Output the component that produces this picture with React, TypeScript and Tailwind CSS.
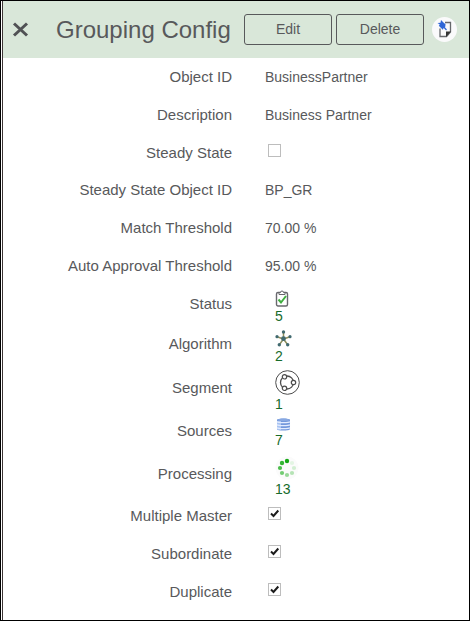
import type { ReactNode } from "react";

function CloseIcon() {
  return (
    <svg width="17" height="17" viewBox="0 0 17 17" fill="none" stroke="#505154" strokeWidth="3" aria-hidden="true">
      <path d="M2 2.500 15 14.500M15 2.500 2 14.500" />
    </svg>
  );
}

function NoteIcon() {
  return (
    <svg width="25" height="25" viewBox="0 0 25 25" aria-hidden="true">
      <circle cx="12.5" cy="12.5" r="12.5" fill="#fafafb" />
      <path d="M13 5.500h5.500v9.500l-4 4.500H8v-8" fill="none" stroke="#66686b" strokeWidth="1.300" />
      <path d="M18.800 14.500 14 20v-5.500z" fill="#333" />
      <path d="M9 3 12.500 6.500l1 .3-.2 3-1.500 1-1 2-4-4 1-1.300L5.500 6l3-.3z" fill="#2f66d6" />
      <path d="m10.500 8.500 4 4.500" stroke="#2f66d6" strokeWidth="1.200" />
    </svg>
  );
}

function ClipboardIcon() {
  return (
    <svg width="14" height="17" viewBox="0 0 14 17" fill="none" aria-hidden="true">
      <rect x="1.500" y="2.500" width="11" height="13.500" rx="1.500" stroke="#68686d" strokeWidth="1.400" />
      <path d="M4 4.500V2.500h1.500a1.500 1.500 0 0 1 3 0H10v2z" fill="#fff" stroke="#68686d" />
      <path d="m3.500 9.500 2.500 3L11 6" stroke="#3fae3f" strokeWidth="2" />
    </svg>
  );
}

function NetworkIcon() {
  return (
    <svg width="17" height="17" viewBox="0 0 17 17" aria-hidden="true">
      <path d="M8.500 9V2M8.500 9 2 6.700M8.500 9 15 6.700M8.500 9 4.300 14.700M8.500 9l4.200 5.700" stroke="#8f8f5c" strokeWidth="1.500" />
      <g fill="#416a70">
        <circle cx="8.500" cy="8.700" r="2.400" />
        <circle cx="8.500" cy="2" r="1.700" />
        <circle cx="2" cy="6.700" r="1.600" />
        <circle cx="15" cy="6.700" r="1.600" />
        <circle cx="4.300" cy="14.700" r="1.700" />
        <circle cx="12.700" cy="14.700" r="1.700" />
      </g>
    </svg>
  );
}

function SegmentIcon() {
  return (
    <svg width="25" height="25" viewBox="0 0 25 25" fill="none" stroke="#4d4d4d" aria-hidden="true">
      <circle cx="12.500" cy="12.500" r="11.800" strokeWidth="1" />
      <circle cx="12" cy="12.500" r="6.500" strokeWidth="1.300" />
      <g fill="#fff" strokeWidth="1.200">
        <circle cx="9.500" cy="6.800" r="2.200" />
        <circle cx="18.500" cy="12.500" r="2.200" />
        <circle cx="9.500" cy="18.300" r="2.200" />
      </g>
    </svg>
  );
}

function DatabaseIcon() {
  return (
    <svg width="15" height="13" viewBox="0 0 15 13" aria-hidden="true">
      <path d="M1 2v9c0 2 13 2 13 0V2c0-2-13-2-13 0z" fill="#7398dc" />
      <path d="M1 3v8c0 .8 1.500 1.200 4 1.400V3z" fill="#a9c4f2" />
      <path d="M1 3.700c1.500 1.100 11.500 1.100 13 0M1 6.700c1.500 1.100 11.500 1.100 13 0M1 9.700c1.500 1.100 11.500 1.100 13 0" fill="none" stroke="#e3ecff" strokeWidth="1.200" />
      <ellipse cx="7.500" cy="1.900" rx="6.300" ry="1.300" fill="#88a8e2" />
    </svg>
  );
}

function SpinnerIcon() {
  return (
    <svg width="24" height="24" viewBox="0 0 24 24" aria-hidden="true">
      <circle cx="12" cy="12" r="11.500" fill="#fbfbfb" />
      <circle cx="12" cy="5" r="2.200" fill="#16a816" />
      <circle cx="7" cy="7" r="2.200" fill="#35b535" />
      <circle cx="5" cy="12" r="2.100" fill="#4cbd4c" />
      <circle cx="7" cy="17" r="2.100" fill="#72cb72" />
      <circle cx="12" cy="19" r="2.100" fill="#98d898" />
      <circle cx="17" cy="17" r="2.100" fill="#b5e3b5" />
      <circle cx="19" cy="12" r="2.100" fill="#d2efd2" />
      <circle cx="17" cy="7" r="2.100" fill="#e3f5e3" />
    </svg>
  );
}

function Row({ label, height, htmlFor, children }: { label: string; height: string; htmlFor?: string; children: ReactNode }) {
  const labelClass = "block pt-[10px] text-right text-[15px] leading-[18px]";
  return (
    <div className={`grid grid-cols-[229px_1fr] gap-x-[33px] ${height}`}>
      {htmlFor ? (
        <label htmlFor={htmlFor} className={labelClass}>{label}</label>
      ) : (
        <span className={labelClass}>{label}</span>
      )}
      {children}
    </div>
  );
}

function TextRow({ label, value }: { label: string; value: string }) {
  return (
    <Row label={label} height="h-[38px]">
      <span className="pt-[10px] text-[14px] leading-[18px]">{value}</span>
    </Row>
  );
}

function CheckRow({ id, label, checked = false, height = "h-[38px]" }: { id: string; label: string; checked?: boolean; height?: string }) {
  return (
    <Row label={label} height={height} htmlFor={id}>
      <span className="mt-[10px] ml-[3px] grid h-[13px] w-[13px]">
        <input
          id={id}
          type="checkbox"
          defaultChecked={checked}
          className="peer col-start-1 row-start-1 h-[13px] w-[13px] appearance-none border border-[#bdbdbd] bg-white"
        />
        <svg
          viewBox="0 0 13 13"
          fill="none"
          stroke="#1c1c1c"
          strokeWidth="2"
          aria-hidden="true"
          className="pointer-events-none invisible col-start-1 row-start-1 h-[13px] w-[13px] peer-checked:visible"
        >
          <path d="m3 6.500 2.500 2.500 4.800-5.500" />
        </svg>
      </span>
    </Row>
  );
}

function CountRow({ label, count, height, pad, iconPad = "pl-[10px]", icon }: { label: string; count: number; height: string; pad: string; iconPad?: string; icon: ReactNode }) {
  return (
    <Row label={label} height={height}>
      <div className={`flex flex-col items-start ${pad}`}>
        <span className={`block ${iconPad} [&>svg]:block`}>{icon}</span>
        <a href="#" className="pl-[10px] text-[14px] leading-[18px] text-[#176b2b]">{count}</a>
      </div>
    </Row>
  );
}

export default function App() {
  return (
    <div className="min-h-screen border border-black bg-white pl-px font-['Liberation_Sans',Arial,sans-serif] text-[#58595b]">
      <main className="min-h-[calc(100vh-2px)] border-l border-[#3d3535]">
        <header className="flex h-[57px] items-center bg-[#d9e7d9] pr-3 pl-[9px]">
          <button type="button" aria-label="Close">
            <CloseIcon />
          </button>
          <h1 className="ml-[27px] flex-1 text-[24px] leading-[30px] whitespace-nowrap">Grouping Config</h1>
          <button type="button" className="h-[31px] w-[88px] rounded-[3px] border border-[#58595b] text-[14px]">Edit</button>
          <button type="button" className="ml-1 h-[31px] w-[88px] rounded-[3px] border border-[#58595b] text-[14px]">Delete</button>
          <button type="button" aria-label="Pin note" className="ml-2">
            <NoteIcon />
          </button>
        </header>
        <section>
          <TextRow label="Object ID" value="BusinessPartner" />
          <TextRow label="Description" value="Business Partner" />
          <CheckRow id="steady" label="Steady State" height="h-[37px]" />
          <TextRow label="Steady State Object ID" value="BP_GR" />
          <TextRow label="Match Threshold" value="70.00 %" />
          <TextRow label="Auto Approval Threshold" value="95.00 %" />
          <CountRow label="Status" count={5} height="h-[40px]" pad="pt-[5px]" icon={<ClipboardIcon />} />
          <CountRow label="Algorithm" count={2} height="h-[44px]" pad="pt-[5px]" icon={<NetworkIcon />} />
          <CountRow label="Segment" count={1} height="h-[43px]" pad="pt-px" icon={<SegmentIcon />} />
          <CountRow label="Sources" count={7} height="h-[43px]" pad="pt-[6px]" iconPad="pl-[11px]" icon={<DatabaseIcon />} />
          <CountRow label="Processing" count={13} height="h-[42px]" pad="pt-px" icon={<SpinnerIcon />} />
          <CheckRow id="multiple" label="Multiple Master" checked />
          <CheckRow id="subordinate" label="Subordinate" checked />
          <CheckRow id="duplicate" label="Duplicate" checked />
        </section>
      </main>
    </div>
  );
}
